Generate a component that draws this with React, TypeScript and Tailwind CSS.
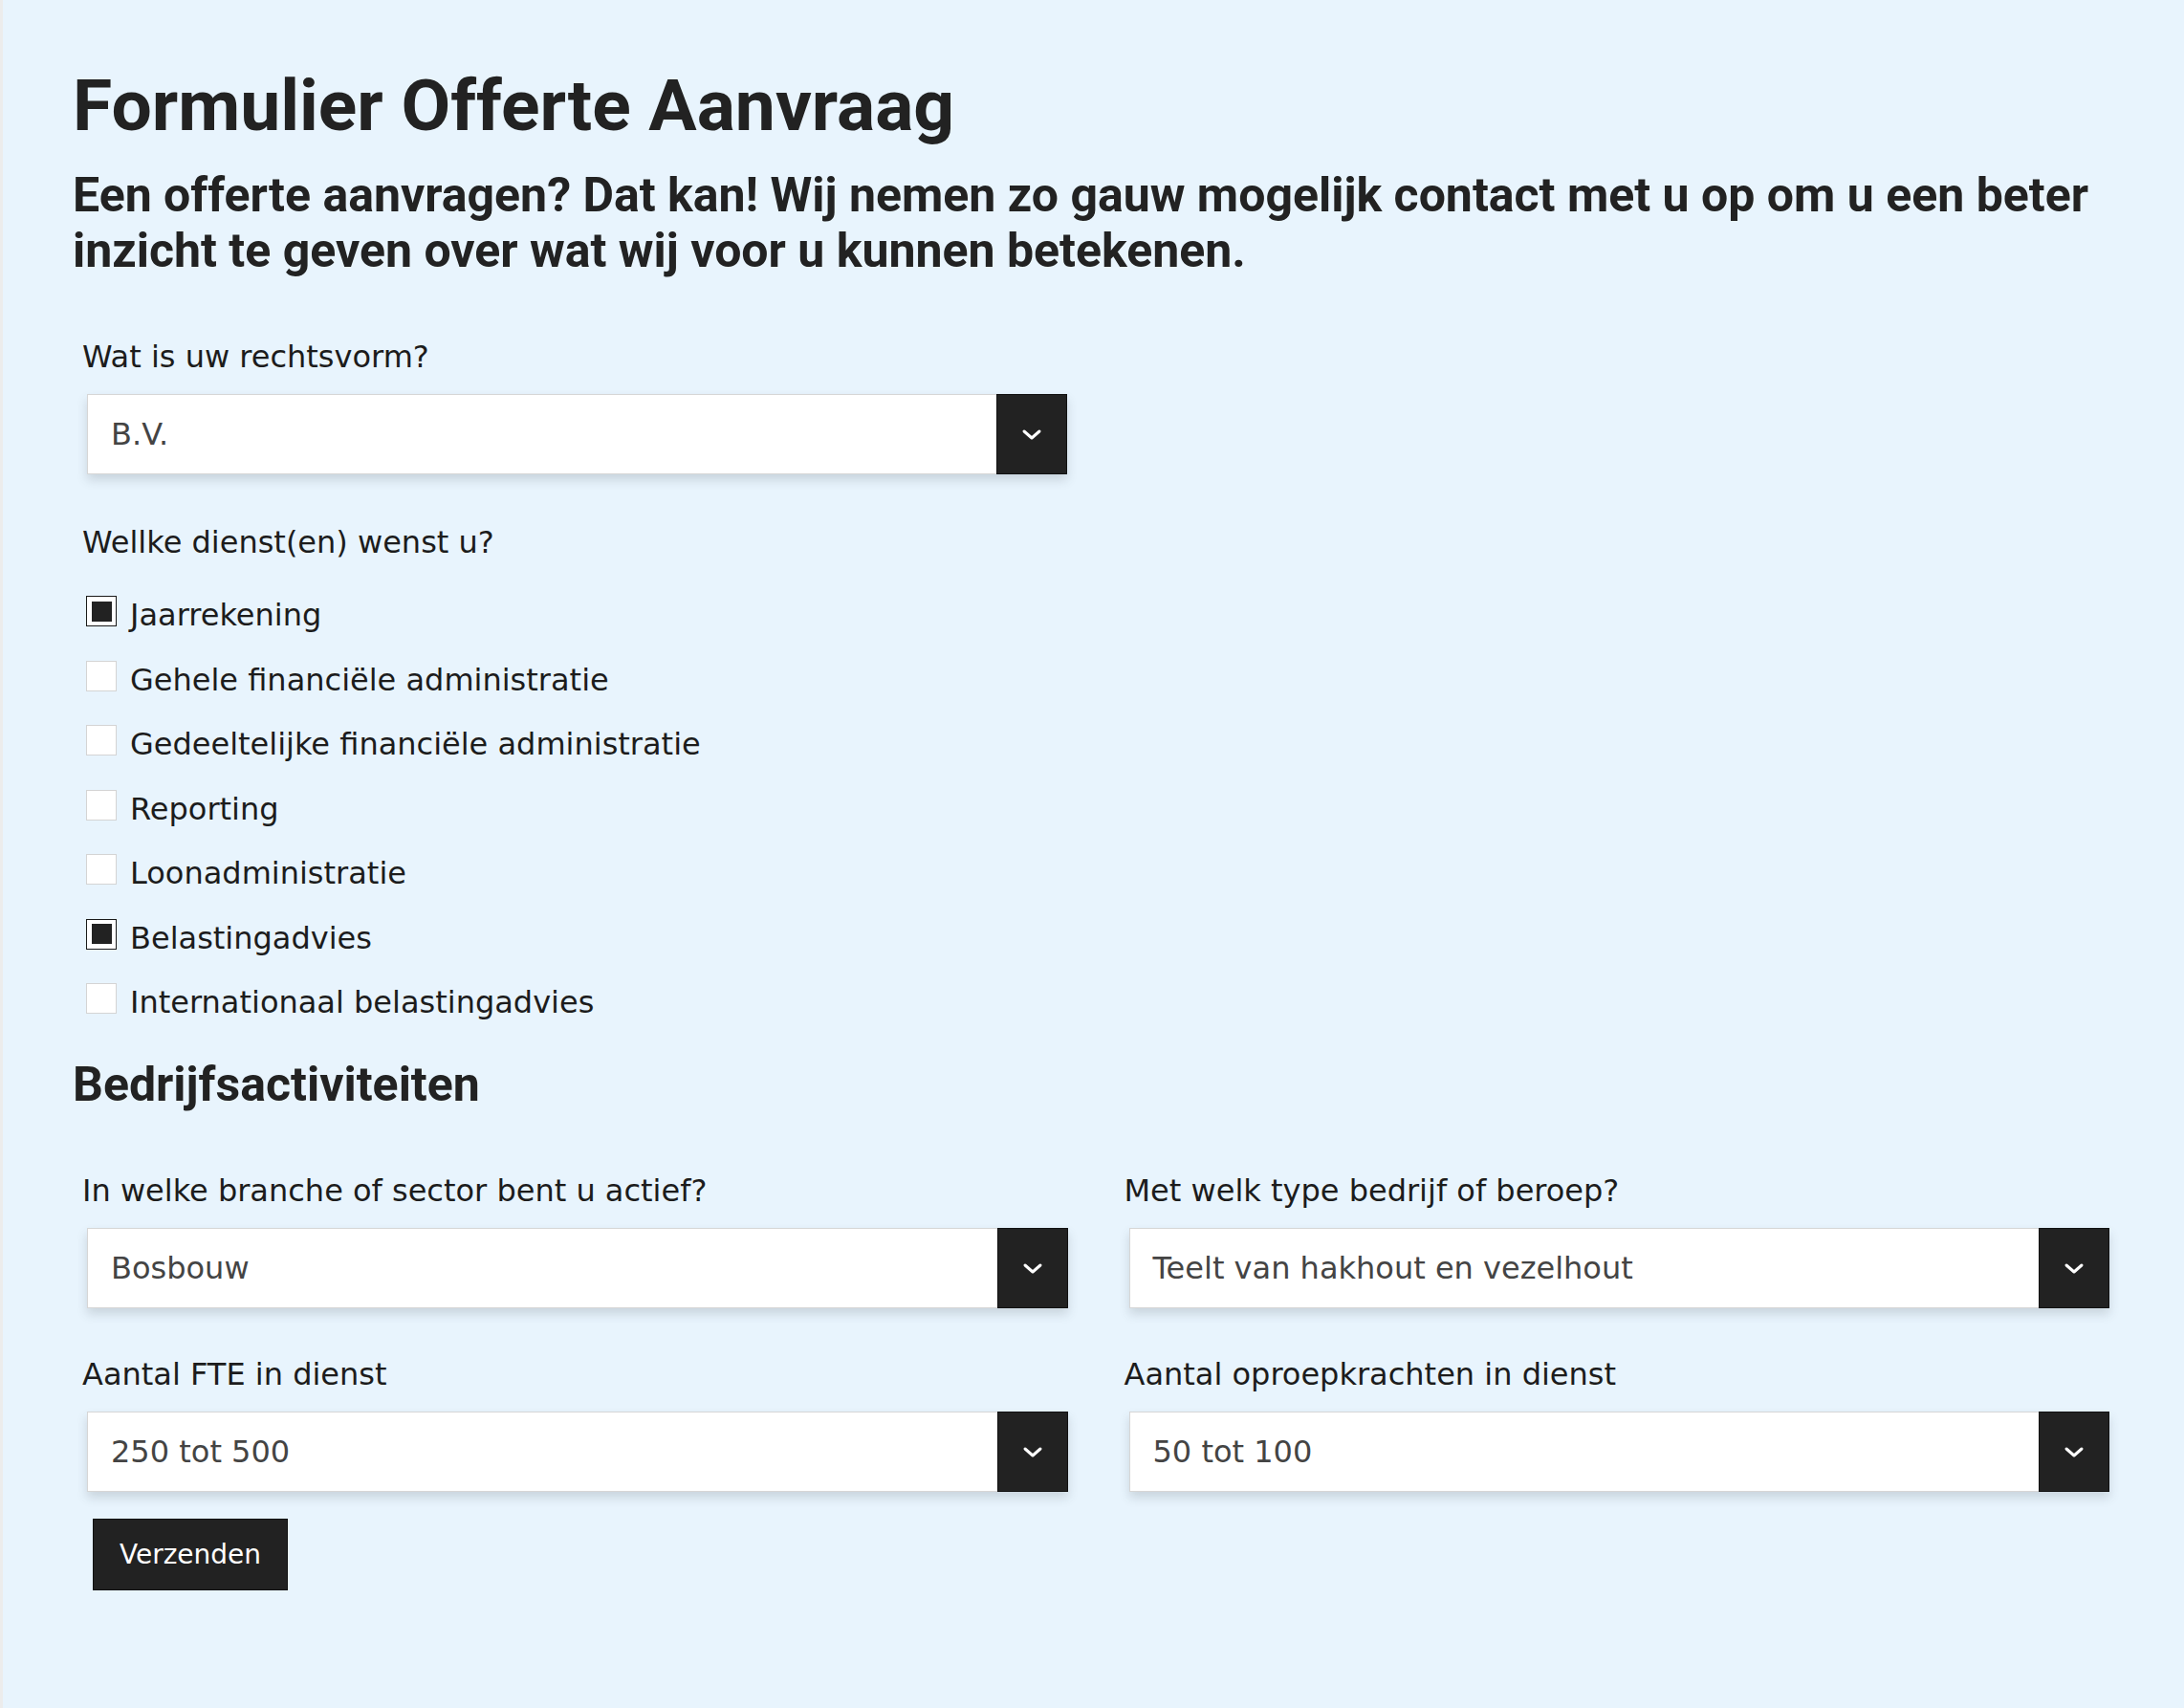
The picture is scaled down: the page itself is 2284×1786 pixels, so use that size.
import React from "react";

const diensten = [
  { label: "Jaarrekening", checked: true },
  { label: "Gehele financiële administratie", checked: false },
  { label: "Gedeeltelijke financiële administratie", checked: false },
  { label: "Reporting", checked: false },
  { label: "Loonadministratie", checked: false },
  { label: "Belastingadvies", checked: true },
  { label: "Internationaal belastingadvies", checked: false },
];

function Chevron() {
  return (
    <svg width="22" height="13" viewBox="0 0 22 13" fill="none">
      <polyline points="3,3 11,10 19,3" stroke="#ffffff" strokeWidth="3" strokeLinecap="round" strokeLinejoin="round" />
    </svg>
  );
}

function SelectBox({ value }: { value: string }) {
  return (
    <div className="mx-[5px] flex h-[84px] border border-[#d6d6d6] bg-white shadow-[0_6px_10px_rgba(60,70,80,0.18)]">
      <div className="flex flex-1 items-center pl-[24px] text-[32px] text-[#444444]">{value}</div>
      <div className="-my-px -mr-px flex w-[74px] items-center justify-center border border-[#111111] bg-[#222222]">
        <Chevron />
      </div>
    </div>
  );
}

function Field({ label, value, className = "" }: { label: string; value: string; className?: string }) {
  return (
    <div className={className}>
      <label className="block text-[32px] leading-[40px] text-[#1c1c1c]">{label}</label>
      <div className="mt-[19px]">
        <SelectBox value={value} />
      </div>
    </div>
  );
}

function Checkbox({ checked }: { checked: boolean }) {
  if (checked) {
    return (
      <span className="ml-[4px] flex h-[32px] w-[32px] shrink-0 items-center justify-center border-[1.5px] border-[#1a1a1a] bg-white">
        <span className="block h-[21px] w-[21px] bg-[#222222]" />
      </span>
    );
  }
  return <span className="ml-[4px] block h-[32px] w-[32px] shrink-0 border-[1.5px] border-[#d4d4d4] bg-white" />;
}

export default function App() {
  return (
    <div className="min-h-screen border-l-[3px] border-[#ececec] bg-[#e8f4fd] pb-[100px] pl-[73px] pr-[73px] pt-[65px] font-['DejaVu_Sans',sans-serif]">
      <h1 className="font-['Roboto',sans-serif] text-[75px] font-bold leading-[91px] text-[#222222]">
        Formulier Offerte Aanvraag
      </h1>
      <h2 className="mt-[19px] font-['Roboto',sans-serif] text-[50px] font-bold leading-[58px] text-[#222222]">
        Een offerte aanvragen? Dat kan! Wij nemen zo gauw mogelijk contact met u op om u een beter inzicht te geven over wat wij voor u kunnen betekenen.
      </h2>

      <form className="mt-[62px]">
        <div className="pl-[10px]">
          <Field label="Wat is uw rechtsvorm?" value="B.V." className="w-[1035px]" />

          <p className="mt-[51px] text-[32px] leading-[40px] text-[#1c1c1c]">Wellke dienst(en) wenst u?</p>
          <ul className="mt-[36px] flex flex-col gap-[27.5px]">
            {diensten.map((d) => (
              <li key={d.label} className="flex items-start gap-[14px]">
                <Checkbox checked={d.checked} />
                <span className="text-[32px] leading-[40px] text-[#1c1c1c]">{d.label}</span>
              </li>
            ))}
          </ul>
        </div>

        <h3 className="mt-[38px] font-['Roboto',sans-serif] text-[50px] font-bold leading-[56px] text-[#222222]">
          Bedrijfsactiviteiten
        </h3>

        <div className="pl-[10px]">
          <div className="mt-[63px] grid grid-cols-2 gap-x-[54px] gap-y-[49px]">
            <Field label="In welke branche of sector bent u actief?" value="Bosbouw" />
            <Field label="Met welk type bedrijf of beroep?" value="Teelt van hakhout en vezelhout" />
            <Field label="Aantal FTE in dienst" value="250 tot 500" />
            <Field label="Aantal oproepkrachten in dienst" value="50 tot 100" />
          </div>

          <button
            type="button"
            className="ml-[11px] mt-[28px] flex h-[75px] w-[204px] items-center justify-center border border-[#111111] bg-[#222222] text-[28px] text-white"
          >
            Verzenden
          </button>
        </div>
      </form>
    </div>
  );
}
